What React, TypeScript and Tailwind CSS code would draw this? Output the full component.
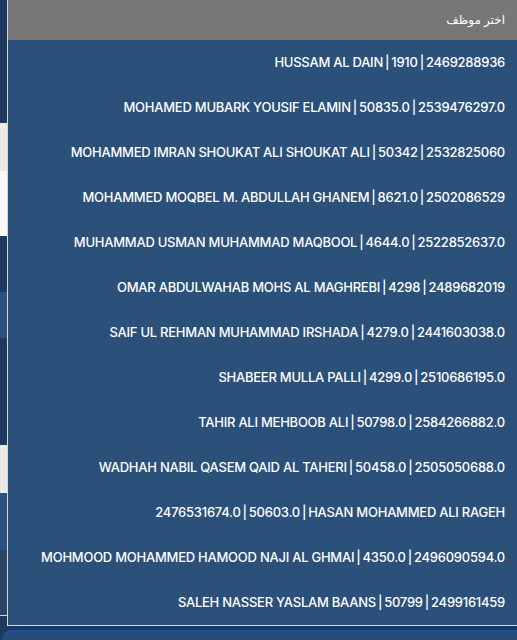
import React from 'react'

const employees = [
  'HUSSAM AL DAIN | 1910 | 2469288936',
  'MOHAMED MUBARK YOUSIF ELAMIN | 50835.0 | 2539476297.0',
  'MOHAMMED IMRAN SHOUKAT ALI SHOUKAT ALI | 50342 | 2532825060',
  'MOHAMMED MOQBEL M. ABDULLAH GHANEM | 8621.0 | 2502086529',
  'MUHAMMAD USMAN MUHAMMAD MAQBOOL | 4644.0 | 2522852637.0',
  'OMAR ABDULWAHAB MOHS AL MAGHREBI | 4298 | 2489682019',
  'SAIF UL REHMAN MUHAMMAD IRSHADA | 4279.0 | 2441603038.0',
  'SHABEER MULLA PALLI | 4299.0 | 2510686195.0',
  'TAHIR ALI MEHBOOB ALI | 50798.0 | 2584266882.0',
  'WADHAH NABIL QASEM QAID AL TAHERI | 50458.0 | 2505050688.0',
  '2476531674.0 | 50603.0 | HASAN MOHAMMED ALI RAGEH',
  'MOHMOOD MOHAMMED HAMOOD NAJI AL GHMAI | 4350.0 | 2496090594.0',
  'SALEH NASSER YASLAM BAANS | 50799 | 2499161459',
]

const Row = ({ text }: { text: string }) => {
  const parts = text.split(' | ')
  return (
    <li className="flex h-[45px] items-center justify-end px-3 text-[13px] font-medium tracking-[-0.25px] whitespace-nowrap">
      {parts.map((p, i) => (
        <React.Fragment key={i}>
          {i > 0 && <span className="mx-[2px]">|</span>}
          <span>{p}</span>
        </React.Fragment>
      ))}
    </li>
  )
}

const App = () => {
  return (
    <div
      className="relative w-[517px] h-[640px] overflow-hidden bg-[#1e3a5f]"
      style={{ fontFamily: 'Inter, "DejaVu Sans", sans-serif' }}
    >
      {/* page behind the open select */}
      <div className="flex flex-col">
        <div className="h-[123px] bg-[#1e3a5f]" />
        <div className="h-[48px] bg-[#e9e9e9]" />
        <div className="h-[65px] bg-[#f7f8fa]" />
        <div className="h-[56px] bg-[#1e3a5f]" />
        <div className="h-[46px] bg-[#2b5280]" />
        <div className="h-[107px] bg-[#1e3a5f]" />
        <div className="h-[48px] bg-[#e9e9e9]" />
        <div className="h-[57px] bg-[#2b5280]" />
        <div className="h-[65px] bg-[#2b4463]" />
        <div className="h-px bg-[#c9d0d8]" />
        <div className="h-[14px] bg-[#1e3a5f]" />
        <div className="ml-[2px] h-[20px] rounded-tl-[10px] border-t-[3px] border-l-[3px] border-[#1f4f8c] bg-[#274a75]" />
      </div>

      {/* open dropdown */}
      <div className="absolute left-[7px] top-0 w-[510px] border-l border-b border-[#d6d6d6] bg-[#2b5079] text-white">
        <div dir="rtl" className="flex h-[40px] items-center bg-[#777777] px-3 text-[12px] font-medium">
          اختر موظف
        </div>
        <ul>
          {employees.map((e) => (
            <Row key={e} text={e} />
          ))}
        </ul>
      </div>
    </div>
  )
}

export default App
